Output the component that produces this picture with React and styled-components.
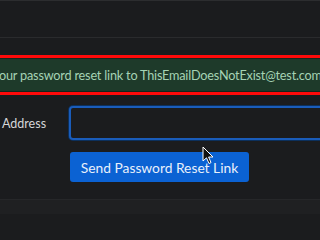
import React from "react";
import styled, { createGlobalStyle } from "styled-components";

const Global = createGlobalStyle`
  html, body { margin: 0; padding: 0; background: #1b1c1e; overflow: hidden; }
  body { width: 320px; height: 214px; font-family: Lato, "Open Sans", sans-serif; }
`;

const Page = styled.div`
  position: relative;
  width: 320px;
  height: 214px;
  display: flex;
  flex-direction: column;
  overflow: hidden;
  background: #1b1c1e;
`;

const TopBar = styled.div`
  height: 36px;
  border-top: 1px solid #2c2d2f;
  border-bottom: 1px solid #2a2b2d;
  background: #1b1c1e;
`;

const Main = styled.div`
  flex: 1;
  display: flex;
  flex-direction: column;
  padding-top: 17px;
`;

const Alert = styled.div`
  margin: 0 -10px;
  height: 40px;
  box-sizing: border-box;
  border: 3px solid #ff0a0a;
  background: #1e3a2a;
  box-shadow: inset 0 0 0 1px #16261d;
  display: flex;
  align-items: center;
  padding-left: 6px;
  white-space: nowrap;
  color: #a5d3b4;
  font-size: 12.7px;
  letter-spacing: -0.2px;
`;

const FormRow = styled.div`
  display: flex;
  align-items: center;
  margin-top: 11px;
  height: 34px;
`;

const Label = styled.label`
  width: 69px;
  flex: none;
  padding-left: 2px;
  box-sizing: border-box;
  color: #d5d6d8;
  font-size: 12.5px;
`;

const Input = styled.input`
  flex: none;
  width: 280px;
  height: 34px;
  box-sizing: border-box;
  background: #1b1c1e;
  border: 2px solid #1a5cba;
  box-shadow: 0 0 0 1px #0c305c;
  border-radius: 4px;
  outline: none;
`;

const ButtonRow = styled.div`
  display: flex;
  padding-left: 70px;
  margin-top: 12px;
`;

const Button = styled.button`
  height: 30px;
  width: 179px;
  border: none;
  border-radius: 3px;
  background: #0b62d3;
  color: #e8f0fb;
  font-family: Lato, sans-serif;
  font-size: 13.8px;
  padding: 0;
`;

const Footer = styled.div`
  margin-top: auto;
  height: 14px;
  border-top: 1px solid #262729;
  background: #1f2022;
`;

const Cursor = styled.svg`
  position: absolute;
  left: 202px;
  top: 146px;
`;

export default function App() {
  return (
    <>
      <Global />
      <Page>
        <TopBar />
        <Main>
          <Alert>our password reset link to ThisEmailDoesNotExist@test.com 1</Alert>
          <FormRow>
            <Label>Address</Label>
            <Input type="email" />
          </FormRow>
          <ButtonRow>
            <Button>Send Password Reset Link</Button>
          </ButtonRow>
        </Main>
        <Footer />
        <Cursor width="13" height="19" viewBox="0 0 13 19">
          <path d="M1 1 L1 15 L4.5 11.8 L7 17.5 L9 16.6 L6.6 11 L11 11 Z" fill="#111" stroke="#fff" strokeWidth="1" strokeLinejoin="round" />
        </Cursor>
      </Page>
    </>
  );
}
